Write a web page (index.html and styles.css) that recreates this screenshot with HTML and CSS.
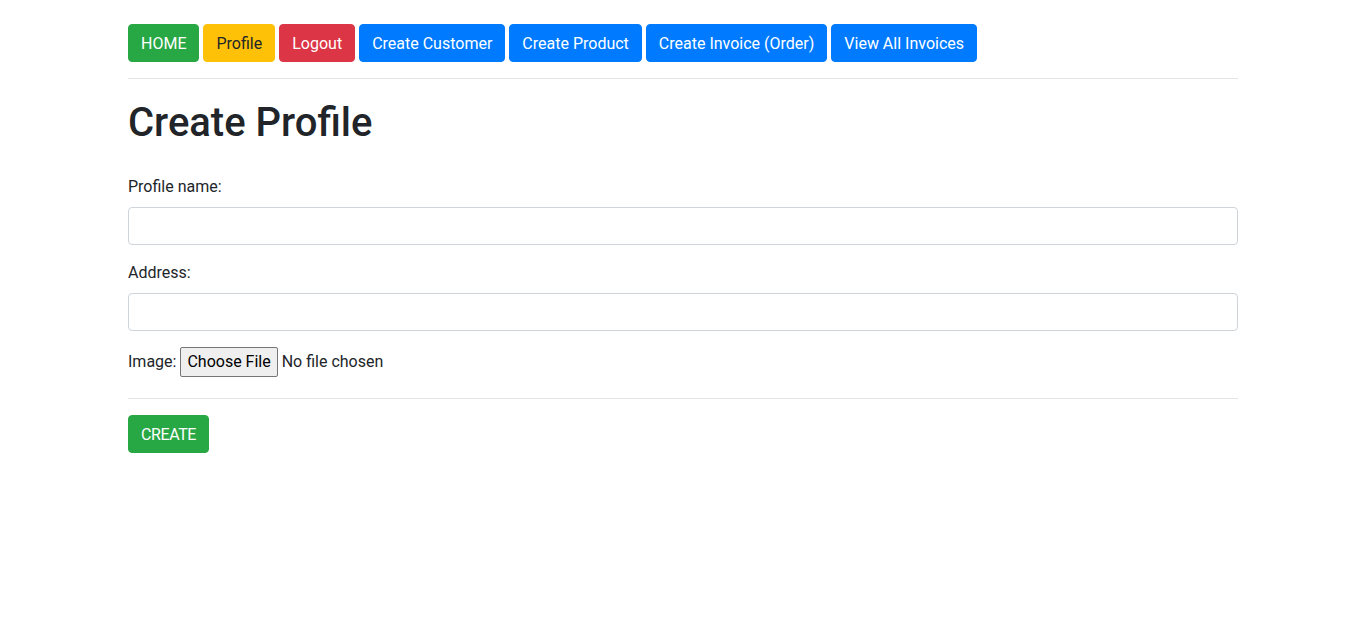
FILE: index.html
```html
<!DOCTYPE html>
<html lang="en">
<head>
<meta charset="utf-8">
<title>Create Profile</title>
<link rel="stylesheet" href="styles.css">
</head>
<body>
<div class="container">
  <nav class="nav">
    <a class="btn btn-success" href="#">HOME</a>
    <a class="btn btn-warning" href="#">Profile</a>
    <a class="btn btn-danger" href="#">Logout</a>
    <a class="btn btn-primary" href="#">Create Customer</a>
    <a class="btn btn-primary" href="#">Create Product</a>
    <a class="btn btn-primary" href="#">Create Invoice (Order)</a>
    <a class="btn btn-primary" href="#">View All Invoices</a>
  </nav>
  <hr class="rule">
  <h1 class="title">Create Profile</h1>
  <form class="form">
    <div class="form-group">
      <label class="label" for="name">Profile name:</label>
      <input class="form-control" id="name" type="text">
    </div>
    <div class="form-group">
      <label class="label" for="address">Address:</label>
      <input class="form-control" id="address" type="text">
    </div>
    <div class="form-group file-row">
      <label for="image">Image:</label>
      <input class="file-input" id="image" type="file">
    </div>
    <hr class="rule">
    <button class="btn btn-success btn-caps" type="button">CREATE</button>
  </form>
</div>
</body>
</html>
```
FILE: styles.css
```css
* { box-sizing: border-box; }
html, body { margin: 0; padding: 0; }
body {
  font-family: Roboto, "Liberation Sans", sans-serif;
  font-size: 16px;
  line-height: 1.5;
  color: #212529;
  background: #fff;
}
.container {
  width: 1140px;
  margin: 0 auto;
  padding: 24px 15px 0;
}
.nav {
  display: flex;
  gap: 4px;
}
.btn {
  display: inline-block;
  font-family: inherit;
  font-size: 16px;
  line-height: 24px;
  padding: 7px 12px 5px;
  border: 1px solid transparent;
  border-radius: 4px;
  text-decoration: none;
  cursor: pointer;
  color: #fff;
}
.btn-caps { letter-spacing: -0.4px; }
.btn-success { background: #28a745; border-color: #28a745; }
.btn-warning { background: #ffc107; border-color: #ffc107; color: #212529; }
.btn-danger { background: #dc3545; border-color: #dc3545; }
.btn-primary { background: #007bff; border-color: #007bff; }
.rule {
  margin: 16px 0;
  border: 0;
  border-top: 1px solid rgba(0, 0, 0, 0.1);
  height: 0;
}
.title {
  margin: 0 0 28px;
  padding-top: 4px;
  font-size: 40px;
  font-weight: 500;
  line-height: 1.2;
}
.form { margin: 0; }
.form-group { margin-bottom: 16px; }
.label {
  display: inline-block;
  margin-bottom: 8px;
}
.form-control {
  display: block;
  width: 100%;
  height: 38px;
  padding: 6px 12px;
  font-family: inherit;
  font-size: 16px;
  line-height: 1.5;
  color: #495057;
  background: #fff;
  border: 1px solid #ced4da;
  border-radius: 4px;
}
.file-row { padding-bottom: 5px; }
.file-input {
  font-family: inherit;
  font-size: 16px;
  line-height: 1.5;
  color: #212529;
}
.file-input::file-selector-button {
  font-family: inherit;
  font-size: 16px;
  line-height: 24px;
  padding: 2px 6px;
  margin-right: 4px;
  background: #efefef;
  color: #000;
  border: 1px solid #767676;
  border-radius: 2px;
}
```
